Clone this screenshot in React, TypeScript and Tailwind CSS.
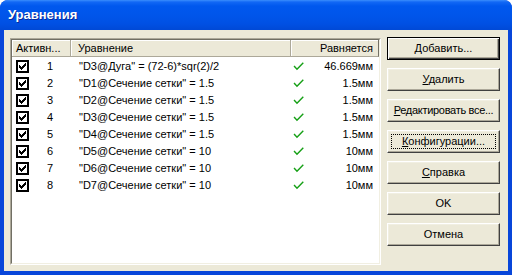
import React from "react";

const rows = [
  { n: 1, eq: '"D3@Дуга" = (72-6)*sqr(2)/2', v: "46.669мм" },
  { n: 2, eq: '"D1@Сечение сетки" = 1.5', v: "1.5мм" },
  { n: 3, eq: '"D2@Сечение сетки" = 1.5', v: "1.5мм" },
  { n: 4, eq: '"D3@Сечение сетки" = 1.5', v: "1.5мм" },
  { n: 5, eq: '"D4@Сечение сетки" = 1.5', v: "1.5мм" },
  { n: 6, eq: '"D5@Сечение сетки" = 10', v: "10мм" },
  { n: 7, eq: '"D6@Сечение сетки" = 10', v: "10мм" },
  { n: 8, eq: '"D7@Сечение сетки" = 10', v: "10мм" },
];

const checkPixels: [number, number][] = [
  [6, 0],
  [5, 1], [6, 1],
  [0, 2], [4, 2], [5, 2], [6, 2],
  [0, 3], [1, 3], [3, 3], [4, 3], [5, 3],
  [0, 4], [1, 4], [2, 4], [3, 4], [4, 4],
  [1, 5], [2, 5], [3, 5],
  [2, 6],
];

function CheckBox() {
  return (
    <svg width="13" height="13" viewBox="0 0 13 13" shapeRendering="crispEdges" className="shrink-0">
      <rect x="0" y="0" width="13" height="13" fill="#000" />
      <rect x="2" y="2" width="9" height="9" fill="#fff" />
      {checkPixels.map(([x, y], i) => (
        <rect key={i} x={3 + x} y={3 + y} width="1" height="1" fill="#000" />
      ))}
    </svg>
  );
}

function GreenCheck() {
  return (
    <svg width="11" height="9" viewBox="0 0 11 9" className="shrink-0">
      <path d="M1.5 4.5 L4 7.2 L9.8 1.2" fill="none" stroke="#16A016" strokeWidth="1.4" strokeLinecap="square" strokeLinejoin="miter" />
    </svg>
  );
}

function Btn({
  children,
  def,
  focus,
}: {
  children: React.ReactNode;
  def?: boolean;
  focus?: boolean;
}) {
  const base =
    "h-[23px] w-[113px] shrink-0 bg-[#ECE9D8] flex items-stretch p-[3px] text-[11px] text-black whitespace-nowrap";
  const normal =
    "border border-t-white border-l-white border-b-[#404040] border-r-[#404040] shadow-[inset_-1px_-1px_0_#ACA899,inset_1px_1px_0_#F1EFE2]";
  const deflt =
    "border border-black shadow-[inset_1px_1px_0_#fff,inset_-1px_-1px_0_#404040,inset_-2px_-2px_0_#ACA899]";
  return (
    <div className={`${base} ${def ? deflt : normal}`}>
      <div
        className={`flex-1 flex items-center justify-center ${
          focus ? "border border-dotted border-black" : ""
        }`}
      >
        <span className="leading-none whitespace-nowrap">{children}</span>
      </div>
    </div>
  );
}

export default function App() {
  return (
    <div className="w-[512px] h-[275px] flex flex-col rounded-t-[8px] overflow-hidden bg-[#0846DA] font-['Liberation_Sans',Arial,sans-serif] text-[11px] text-black">
      <div className="h-[30px] shrink-0 flex items-center pl-[8px] pb-[1px] bg-[linear-gradient(to_bottom,#3A8EFC_0px,#1268F5_2px,#0058EE_6px,#0055EA_16px,#0050E3_24px,#0049D6_30px)]">
        <span className="text-white font-bold text-[13px] [text-shadow:1px_1px_0_#0A2A9A]">
          Уравнения
        </span>
      </div>
      <div className="flex-1 mx-[4px] mb-[4px] bg-[#ECE9D8] flex items-start">
        {/* list view */}
        <div className="ml-[6px] mt-[8px] w-[371px] h-[227px] border border-t-[#ACA899] border-l-[#ACA899] border-b-white border-r-white">
          <div className="w-full h-full border border-t-[#716F64] border-l-[#716F64] border-b-[#F1EFE2] border-r-[#F1EFE2] bg-white flex flex-col">
            <div className="h-[17px] flex shrink-0">
              <div className="w-[59px] flex items-center pl-[4px] bg-[#ECE9D8] border-r border-b border-r-[#ACA899] border-b-[#ACA899] shadow-[inset_1px_1px_0_#fff]">
                Активн...
              </div>
              <div className="w-[220px] flex items-center pl-[7px] bg-[#ECE9D8] border-r border-b border-r-[#ACA899] border-b-[#ACA899] shadow-[inset_1px_1px_0_#fff]">
                Уравнение
              </div>
              <div className="w-[88px] flex items-center justify-end pr-[5px] bg-[#ECE9D8] border-r border-b border-r-[#716F64] border-b-[#ACA899] shadow-[inset_1px_1px_0_#fff]">
                Равняется
              </div>
            </div>
            <div className="flex flex-col pt-[1px]">
              {rows.map((r) => (
                <div key={r.n} className="h-[17px] flex items-center">
                  <div className="w-[59px] flex items-center pl-[4px]">
                    <CheckBox />
                    <span className="flex-1 text-center">{r.n}</span>
                  </div>
                  <div className="w-[220px] pl-[8px] whitespace-nowrap">{r.eq}</div>
                  <div className="w-[88px] flex items-center pl-[2px] pr-[6px]">
                    <GreenCheck />
                    <span className="flex-1 text-right">{r.v}</span>
                  </div>
                </div>
              ))}
            </div>
          </div>
        </div>
        {/* buttons */}
        <div className="ml-[6px] mt-[7px] flex flex-col gap-[8px]">
          <Btn def>
            <span className="underline">Д</span>обавить...
          </Btn>
          <Btn>
            <span className="underline">У</span>далить
          </Btn>
          <Btn>
            <span className="tracking-[-0.3px]">
              <span className="underline">Р</span>едактировать все...
            </span>
          </Btn>
          <Btn focus>
            <span className="underline">К</span>онфигурации...
          </Btn>
          <Btn>
            <span className="underline">С</span>правка
          </Btn>
          <Btn>OK</Btn>
          <Btn>Отмена</Btn>
        </div>
      </div>
    </div>
  );
}
